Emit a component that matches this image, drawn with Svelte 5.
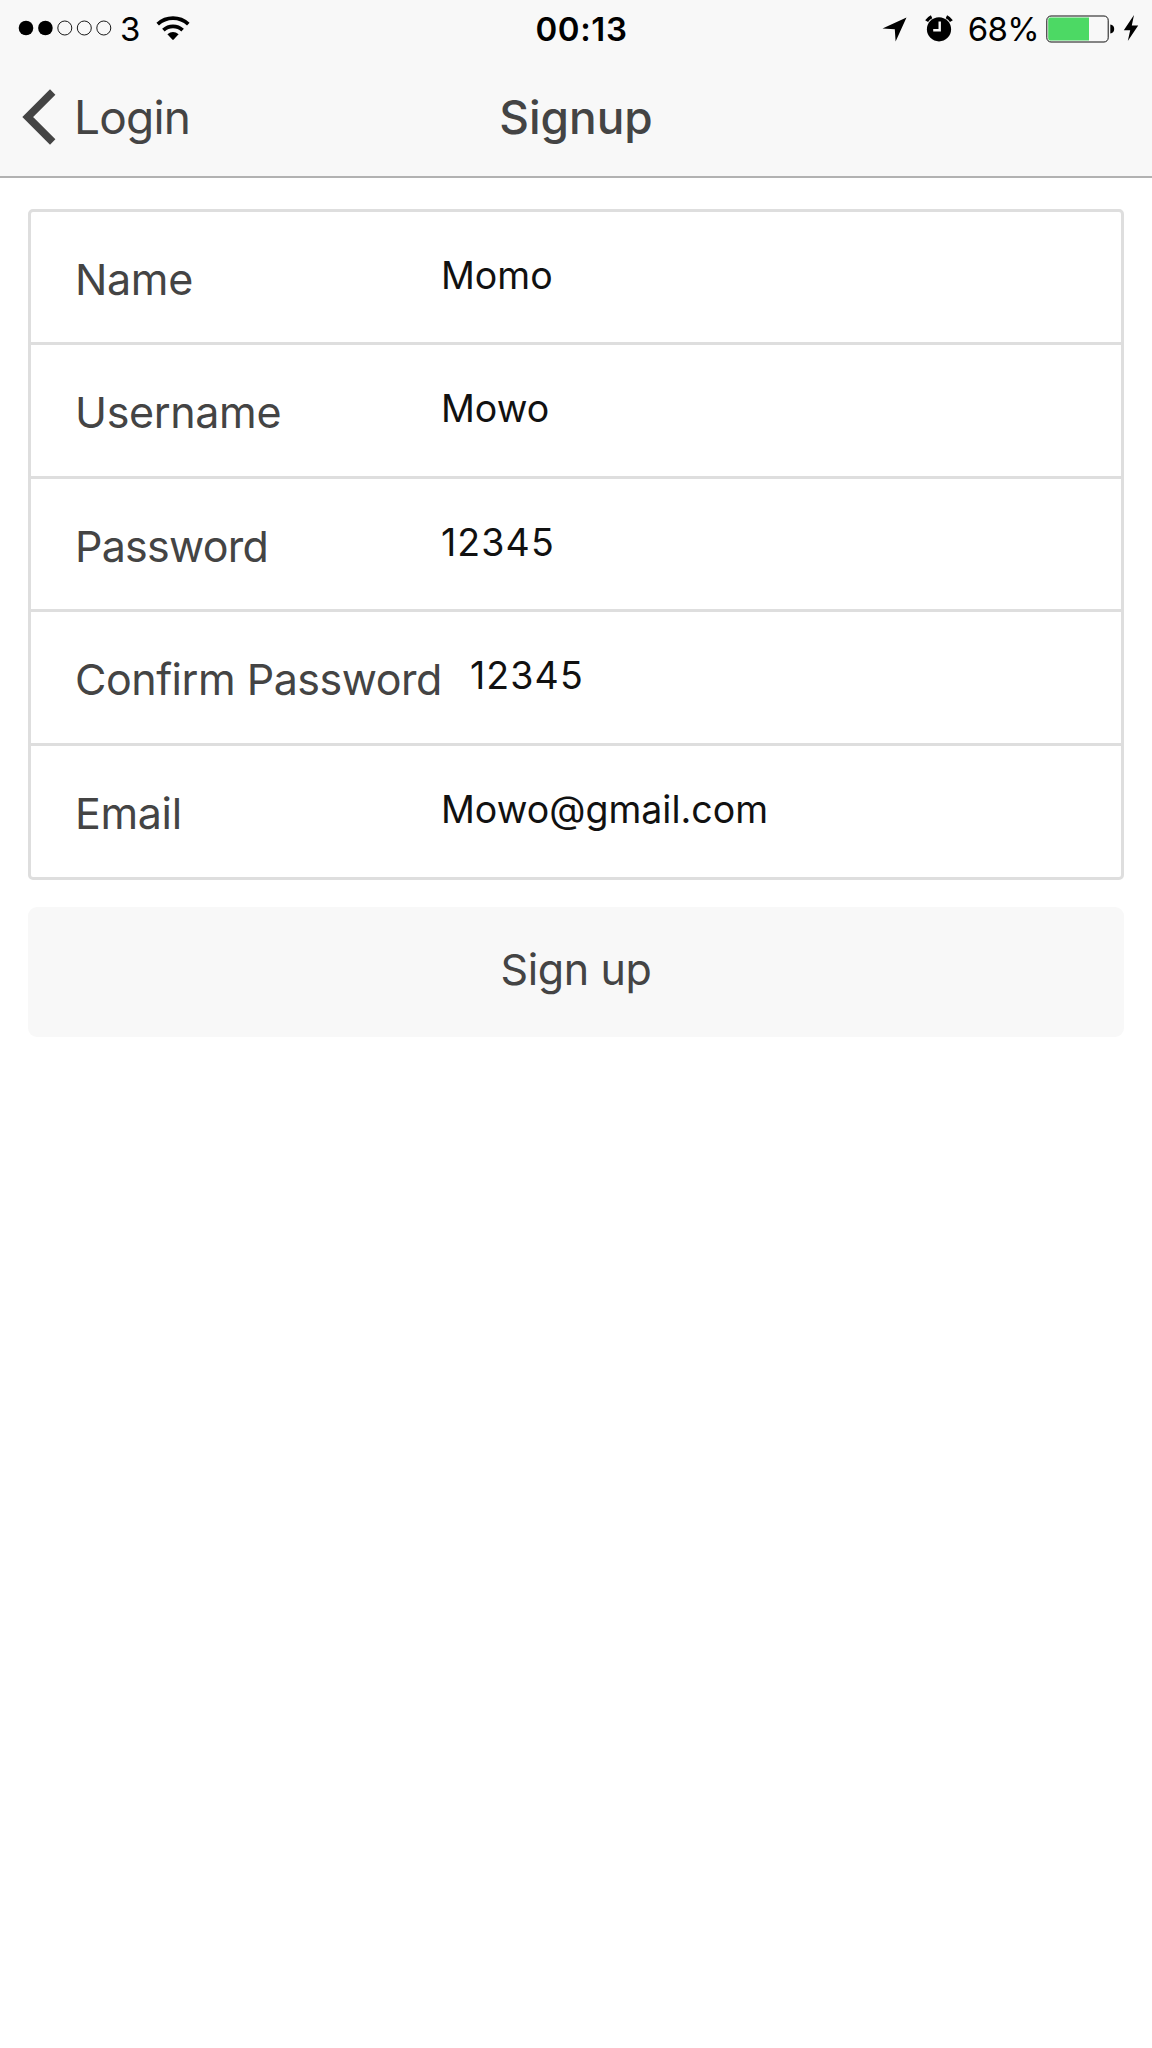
<script>
  const fields = [
    { label: 'Name', value: 'Momo', kind: 'name' },
    { label: 'Username', value: 'Mowo', kind: 'username' },
    { label: 'Password', value: '12345', kind: 'password' },
    { label: 'Confirm Password', value: '12345', kind: 'confirm' },
    { label: 'Email', value: 'Mowo@gmail.com', kind: 'email' }
  ];
</script>

<div class="screen">
  <header>
    <div class="status">
      <div class="side">
        <svg class="signal" width="94" height="18" viewBox="0 0 94 18">
          <circle cx="8" cy="9" r="7.3" />
          <circle cx="27.4" cy="9" r="7.3" />
          <g fill="none" stroke="#000" stroke-width="0.9">
            <circle cx="46.8" cy="9" r="7" />
            <circle cx="66.3" cy="9" r="7" />
            <circle cx="85.8" cy="9" r="7" />
          </g>
        </svg>
        <span class="carrier">3</span>
        <svg class="wifi" width="34" height="26" viewBox="0 0 34 26">
          <g fill="none" stroke="#000" stroke-width="3.7">
            <path d="M1.7 9.2A22.5 22.5 0 0 1 32.3 9.2" />
            <path d="M7.4 15.1A14 14 0 0 1 26.6 15.1" />
          </g>
          <path d="M11.4 19.2Q17 14.6 22.6 19.2L17.7 24.6Q17 25.3 16.3 24.6Z" />
        </svg>
      </div>
      <span class="time">00:13</span>
      <div class="side right">
        <svg class="locate" width="25" height="25" viewBox="0 0 25 25">
          <path d="M24.5 0.5L13.6 24.5L12.8 12.2L0.5 11.4Z" />
        </svg>
        <svg class="alarm" width="28" height="27" viewBox="0 0 28 27">
          <circle cx="14" cy="14.3" r="12.1" />
          <path d="M1.6 6.2A12 12 0 0 1 6.6 1.8M26.4 6.2A12 12 0 0 0 21.4 1.8" fill="none" stroke="#000" stroke-width="3.4" />
          <path d="M14.7 6.5V15.2H8.2" fill="none" stroke="#f8f8f8" stroke-width="2.4" />
        </svg>
        <span class="percent">68%</span>
        <svg class="battery" width="69" height="28" viewBox="0 0 69 28">
          <rect x="0.8" y="1" width="61.4" height="26" rx="4.2" fill="none" stroke="#111" stroke-width="1" />
          <path d="M4.5 2.6H43V25.4H4.5A2.2 2.2 0 0 1 2.2 23.2V4.8A2.2 2.2 0 0 1 4.5 2.6Z" fill="#4cd964" />
          <path d="M64.3 9.5Q68.2 10.3 68.2 14T64.3 18.5Z" />
        </svg>
        <svg class="bolt" width="16" height="28" viewBox="0 0 16 28">
          <path d="M11 1L0.8 16.2H7.2L4.8 27L15.2 11.4H8.8Z" />
        </svg>
      </div>
    </div>
    <nav>
      <a class="back" href="#login">
        <svg width="34" height="56" viewBox="0 0 34 56">
          <path d="M30.7 3L5.7 28L30.7 53" fill="none" stroke="#444" stroke-width="7.6" />
        </svg>
        <span>Login</span>
      </a>
      <h1>Signup</h1>
    </nav>
  </header>

  <main>
    <div class="list">
      {#each fields as field}
        <div class="row {field.kind}">
          <span class="label">{field.label}</span>
          <span class="value">{field.value}</span>
        </div>
      {/each}
    </div>
    <button type="button"><span>Sign up</span></button>
  </main>
</div>

<style>
  :global(body) {
    margin: 0;
    background: #fff;
  }
  .screen {
    width: 1152px;
    height: 2048px;
    overflow: hidden;
    background: #fff;
    color: #444;
    font-family: Inter, 'Liberation Sans', sans-serif;
  }
  header {
    box-sizing: border-box;
    height: 178px;
    background: #f8f8f8;
    border-bottom: 2px solid #b2b2b2;
  }
  svg {
    display: block;
    flex: none;
  }
  .status {
    display: grid;
    grid-template-columns: 1fr auto 1fr;
    align-items: center;
    height: 58px;
    padding: 0 13px 0 18px;
    color: #000;
    font-size: 33px;
    line-height: 40px;
  }
  .side {
    display: flex;
    align-items: center;
  }
  .right {
    justify-content: flex-end;
  }
  .signal {
    margin-bottom: 3px;
  }
  .carrier {
    width: 20px;
    margin-left: 8px;
  }
  .wifi {
    margin: 0 0 3px 16px;
  }
  .time {
    font-weight: 600;
    margin-left: 6px;
    letter-spacing: 0.6px;
  }
  .locate {
    margin-right: 18px;
  }
  .alarm {
    margin: 0 15px 2px 0;
  }
  .percent {
    letter-spacing: -0.7px;
  }
  .battery {
    margin: 0 8px 1px 7px;
  }
  .bolt {
    margin-bottom: 3px;
  }
  nav {
    display: grid;
    grid-template-columns: 1fr auto 1fr;
    align-items: center;
    height: 118px;
    padding: 0 22px;
    font-size: 46px;
    line-height: 58px;
  }
  .back {
    display: flex;
    align-items: center;
    color: #444;
    text-decoration: none;
  }
  .back span {
    margin-left: 18px;
    letter-spacing: -0.8px;
  }
  h1 {
    margin: 0;
    font-size: 46px;
    font-weight: 500;
  }
  main {
    padding: 31px 28px 0;
  }
  .list {
    box-sizing: border-box;
    height: 671px;
    display: grid;
    grid-template-rows: 130px 134px 133px 134px 134px;
    border: 3px solid #dedede;
    border-radius: 5px;
  }
  .row {
    display: flex;
    align-items: center;
    padding-left: 44px;
  }
  .row + .row {
    border-top: 3px solid #dedede;
  }
  .label {
    box-sizing: border-box;
    min-width: 366px;
    padding-top: 3px;
    font-size: 43px;
    line-height: 54px;
    letter-spacing: -0.35px;
    white-space: nowrap;
  }
  .password .label {
    letter-spacing: -0.75px;
  }
  .confirm .label {
    width: 395px;
    letter-spacing: -0.48px;
  }
  .value {
    padding-bottom: 3px;
    color: #111;
    font-size: 37.5px;
    line-height: 48px;
  }
  .password .value,
  .confirm .value {
    letter-spacing: 1.1px;
  }
  button {
    display: flex;
    align-items: center;
    justify-content: center;
    box-sizing: border-box;
    width: 100%;
    height: 130px;
    margin-top: 27px;
    padding: 0 0 6px;
    border: 0;
    border-radius: 9px;
    background: #f8f8f8;
    color: #444;
    font: inherit;
    font-size: 43px;
    letter-spacing: -0.4px;
  }
</style>
